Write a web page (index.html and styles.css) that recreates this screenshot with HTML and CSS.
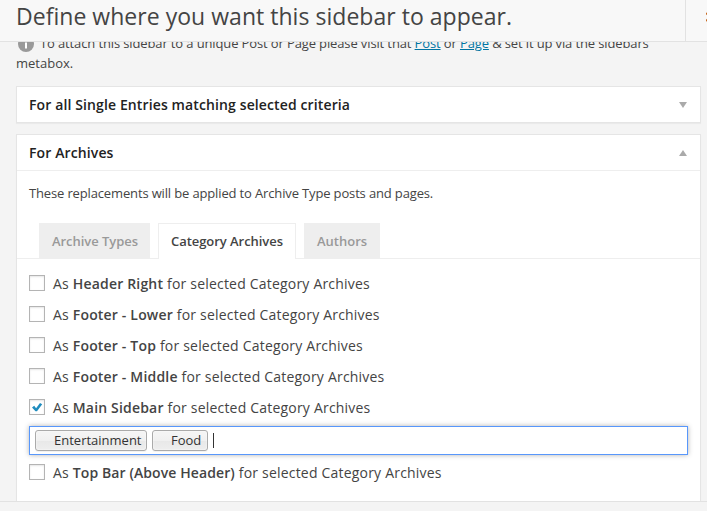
FILE: index.html
```html
<!DOCTYPE html>
<html lang="en">
<head>
<meta charset="utf-8">
<title>Sidebar location</title>
<link rel="stylesheet" href="styles.css">
</head>
<body>
<div class="dialog">
  <header class="titlebar">
    <h1 class="title">Define where you want this sidebar to appear.</h1>
    <div class="close"><svg width="14" height="14" viewBox="0 0 14 14"><path d="M0 1L12 13M0 9L12 -3" fill="none" stroke="#c86a20" stroke-width="1.6"/></svg></div>
  </header>
  <main class="content">
    <p class="notice"><svg class="info" width="16" height="16" viewBox="0 0 16 16"><circle cx="8" cy="8" r="8" fill="#999"/><path d="M7 3h2v2H7zM7 6.500h2v6H7z" fill="#fff"/></svg><span class="lead">To attach this sidebar to a unique Post or Page please visit that <a href="#">Post</a> or <a href="#">Page</a> &amp; set it up via the sidebars</span><br><span>metabox.</span></p>
    <section class="panel">
      <h3 class="panel-head"><span>For all Single Entries matching selected criteria</span><svg class="arrow" width="8" height="6" viewBox="0 0 8 6"><path d="M0 0h8L4 6z" fill="#aaa"/></svg></h3>
    </section>
    <section class="panel open">
      <h3 class="panel-head"><span>For Archives</span><svg class="arrow" width="8" height="6" viewBox="0 0 8 6"><path d="M0 6h8L4 0z" fill="#aaa"/></svg></h3>
      <p class="intro"><span>These replacements will be applied to Archive Type posts and pages.</span></p>
      <nav class="tabs">
        <a class="tab t1"><span>Archive Types</span></a>
        <a class="tab t2 active"><span>Category Archives</span></a>
        <a class="tab t3"><span>Authors</span></a>
      </nav>
      <div class="options">
        <label class="row"><i class="box"></i><span>As <b>Header Right</b> for selected Category Archives</span></label>
        <label class="row"><i class="box"></i><span>As <b>Footer - Lower</b> for selected Category Archives</span></label>
        <label class="row"><i class="box"></i><span>As <b>Footer - Top</b> for selected Category Archives</span></label>
        <label class="row"><i class="box"></i><span>As <b>Footer - Middle</b> for selected Category Archives</span></label>
        <label class="row"><i class="box"><svg width="14" height="14" viewBox="0 0 14 14"><path d="M2 7.500L4.200 5.800L6.100 8.200L10 3L12.200 4.300L7 11.300H5.500Z" fill="#1e8cbe"/></svg></i><span>As <b>Main Sidebar</b> for selected Category Archives</span></label>
        <div class="picker"><span class="chip c1">Entertainment</span><span class="chip c2">Food</span><i class="caret"></i></div>
        <label class="row last"><i class="box"></i><span>As <b>Top Bar (Above Header)</b> for selected Category Archives</span></label>
      </div>
    </section>
  </main>
  <footer class="footer"></footer>
</div>
</body>
</html>
```
FILE: styles.css
```css
* { box-sizing: border-box; }
body { margin: 0; background: #f4f4f4; color: #444; font: 13px/20px "Open Sans", sans-serif; }
.dialog { height: 511px; display: flex; flex-direction: column; overflow: hidden; }
.titlebar { flex: none; height: 42px; display: flex; justify-content: space-between; background: #f8f8f8; border-bottom: 1px solid #e2e2e2; }
.title { margin: 0; padding-left: 16px; font-size: 23px; line-height: 32px; font-weight: 400; white-space: nowrap; letter-spacing: .03px; }
.close { width: 22px; border-left: 1px solid #e2e2e2; padding: 11px 0 0 20px; overflow: hidden; }
.content { flex: 1; min-height: 0; overflow: hidden; padding: 0 6px 0 16px; }
.notice { margin: -9px 0 13px; white-space: nowrap; }
.lead { letter-spacing: -.125px; }
.info { margin: 0 6px 0 2px; vertical-align: -4px; }
a { color: #0074a2; }
.panel { background: #fff; border: 1px solid #e5e5e5; box-shadow: 0 1px 1px rgba(0,0,0,.04); margin-bottom: 11px; height: 37px; }
.panel.open { height: 400px; }
.panel-head { margin: 0; height: 36px; padding: 0 13px 0 12px; display: flex; align-items: center; justify-content: space-between; font-size: 14px; font-weight: 600; color: #222; letter-spacing: .12px; }
.open .panel-head { border-bottom: 1px solid #eee; }
.intro { margin: 12px 12px 20px; letter-spacing: -.145px; }
.tabs { display: flex; gap: 8px; height: 36px; padding-left: 22px; border-bottom: 1px solid #eee; }
.tab { height: 35px; border: 1px solid #eee; border-bottom: 0; background: #eee; color: #999; padding: 0 12px; font-weight: 600; line-height: 35px; white-space: nowrap; letter-spacing: -.05px; }
.tab.active { height: 36px; background: #fff; color: #444; }
.t1 { width: 111px; }
.t2 { width: 138px; }
.t3 { width: 76px; letter-spacing: 0; }
.options { padding: 9px 12px; font-size: 14px; }
.row { display: flex; height: 31px; align-items: center; gap: 8px; white-space: nowrap; letter-spacing: .2px; }
.row b { font-weight: 600; letter-spacing: .18px; }
.last b { letter-spacing: .1px; }
.box { display: block; width: 16px; height: 16px; margin-bottom: 2px; border: 1px solid #b4b4b4; background: #fff; box-shadow: inset 0 1px 2px rgba(0,0,0,.1); }
.box svg { display: block; }
.picker { margin: 3px 0 2px; height: 29px; display: flex; align-items: flex-start; gap: 5px; padding: 3px 5px; border: 1px solid #5897fb; box-shadow: 0 0 5px rgba(0,0,0,.3); font-size: 13px; }
.chip { height: 21px; border: 1px solid #aaa; border-radius: 3px; padding-left: 18px; line-height: 19px; color: #333; background: linear-gradient(#f4f4f4 20%, #f0f0f0 50%, #e8e8e8 52%, #eee); box-shadow: 0 0 2px #fff inset, 0 1px 0 rgba(0,0,0,.05); }
.c1 { width: 112px; }
.c2 { width: 56px; }
.caret { width: 1px; height: 15px; margin-top: 3px; background: #333; }
.footer { flex: none; height: 10px; background: #f4f4f4; border-top: 1px solid #e2e2e2; }
```
